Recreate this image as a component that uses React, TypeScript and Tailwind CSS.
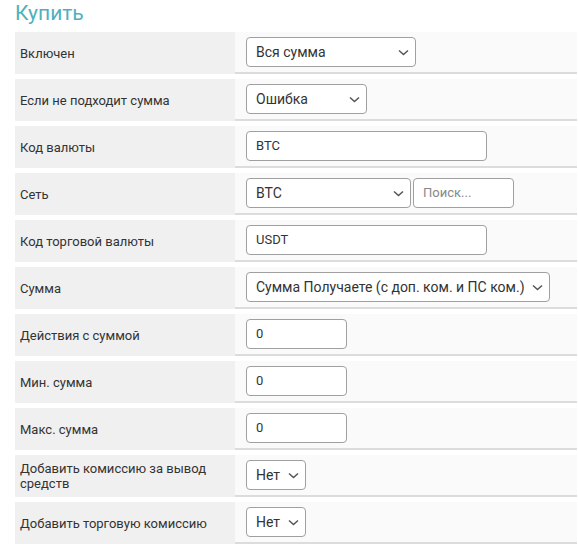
import React from "react";

const Chevron = () => (
  <svg width="11" height="7" viewBox="0 0 11 7" className="shrink-0">
    <polyline points="1,1.5 5.5,5.5 10,1.5" fill="none" stroke="#555" strokeWidth="1.5" />
  </svg>
);

const Select = ({ text, w }: { text: string; w: string }) => (
  <div
    className={`${w} h-[30px] box-border border border-[#a0a0a0] rounded-[4px] bg-white flex items-center justify-between pl-[9px] pr-[6px] text-[14px] text-[#333]`}
  >
    <span className="whitespace-nowrap">{text}</span>
    <Chevron />
  </div>
);

const Input = ({ text, w, placeholder }: { text?: string; w: string; placeholder?: string }) => (
  <div
    className={`${w} h-[30px] box-border border border-[#a0a0a0] rounded-[4px] bg-white flex items-center pl-[9px] text-[13px] ${
      placeholder ? "text-[#888]" : "text-[#333]"
    }`}
  >
    {placeholder ?? text}
  </div>
);

const rows: { label: string; control: React.ReactNode }[] = [
  { label: "Включен", control: <Select text="Вся сумма" w="w-[170px]" /> },
  { label: "Если не подходит сумма", control: <Select text="Ошибка" w="w-[121px]" /> },
  { label: "Код валюты", control: <Input text="BTC" w="w-[241px]" /> },
  {
    label: "Сеть",
    control: (
      <div className="flex gap-[2px]">
        <Select text="BTC" w="w-[165px]" />
        <Input placeholder="Поиск..." w="w-[101px]" />
      </div>
    ),
  },
  { label: "Код торговой валюты", control: <Input text="USDT" w="w-[241px]" /> },
  {
    label: "Сумма",
    control: <Select text="Сумма Получаете (с доп. ком. и ПС ком.)" w="w-[304px]" />,
  },
  { label: "Действия с суммой", control: <Input text="0" w="w-[101px]" /> },
  { label: "Мин. сумма", control: <Input text="0" w="w-[101px]" /> },
  { label: "Макс. сумма", control: <Input text="0" w="w-[101px]" /> },
  { label: "Добавить комиссию за вывод средств", control: <Select text="Нет" w="w-[60px]" /> },
  { label: "Добавить торговую комиссию", control: <Select text="Нет" w="w-[60px]" /> },
];

export default function App() {
  return (
    <div className="w-[578px] h-[547px] bg-white overflow-hidden" style={{ fontFamily: "Roboto, 'Liberation Sans', sans-serif" }}>
      <div className="h-[32px] pl-[15px] pt-[1px] text-[21px] leading-[24px] text-[#4fb0bd]">Купить</div>
      <div className="ml-[15px] grid grid-cols-[220px_342px] auto-rows-[42px] gap-y-[5px]">
        {rows.map((r, i) => (
          <React.Fragment key={i}>
            <div className="bg-[#f0f0f0] flex items-center pl-[5px] pr-[8px] text-[13px] leading-[15px] text-[#333]">
              {r.label}
            </div>
            <div className="bg-[#fafafa] border-b-2 border-[#dcdcdc] box-border flex items-center pl-[11px]">
              {r.control}
            </div>
          </React.Fragment>
        ))}
      </div>
    </div>
  );
}
